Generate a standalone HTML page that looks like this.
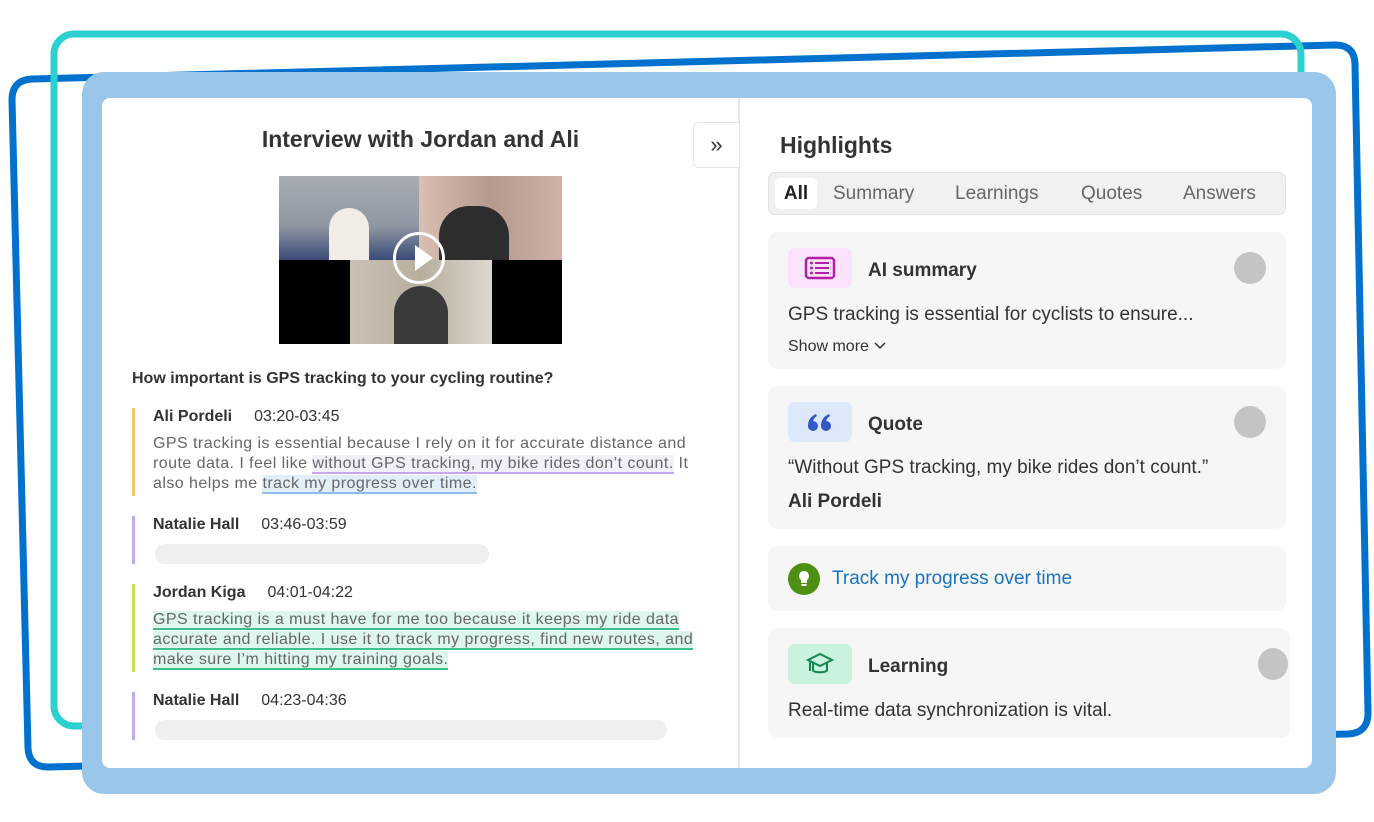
<!DOCTYPE html>
<html><head><meta charset="utf-8"><style>
*{margin:0;padding:0;box-sizing:border-box}
body{width:1374px;height:822px;background:#fff;position:relative;overflow:hidden;font-family:"Liberation Sans",sans-serif;color:#333}
.abs{position:absolute}
.card{position:absolute;left:768px;width:518px;background:#f6f6f6;border-radius:10px}
.ico{position:absolute;left:20px;width:64px;height:40px;border-radius:7px}
.ct{position:absolute;left:100px;font-weight:bold;font-size:19px;color:#333}
.dot{position:absolute;right:20px;width:32px;height:32px;border-radius:50%;background:#c4c4c4}
.bd{position:absolute;left:20px;font-size:19px;color:#333}
.spk{position:absolute;left:132px;border-left:3px solid;padding-left:18px}
.nm{font-weight:bold;font-size:16px;color:#333}
.tm{font-size:16px;color:#333;margin-left:22px;font-weight:normal}
.tx{font-size:16px;color:#666;line-height:20px;margin-top:8px;width:548px;letter-spacing:0.45px}
</style></head><body>
<svg class="abs" style="left:0;top:0" width="1374" height="822">
<path d="M12 100 Q12 80 32 79 L1335 45 Q1355 45 1355 65 L1368 713 Q1368 733 1348 734 L48 767 Q29 767 28 748 Z" fill="none" stroke="#0072ce" stroke-width="7"/>
<rect x="54" y="34" width="1247" height="692" rx="20" fill="none" stroke="#2ecfd0" stroke-width="7"/>
<rect x="82" y="72" width="1254" height="722" rx="22" fill="#9ac6ea"/>
<rect x="102" y="98" width="1210" height="670" rx="8" fill="#fff"/>
<line x1="739" y1="98" x2="739" y2="768" stroke="#e6e6e6" stroke-width="2"/>
</svg>
<div class="abs" style="left:693px;top:122px;width:46px;height:46px;background:#fff;border:1px solid #e6e6e6;border-right:none;border-radius:6px 0 0 6px;font-size:22px;text-align:center;line-height:44px;color:#333">»</div>
<div class="abs" style="left:102px;top:126px;width:637px;text-align:center;font-size:23px;font-weight:bold;color:#333">Interview with Jordan and Ali</div>
<div class="abs" style="left:279px;top:176px;width:283px;height:168px;background:#000">
 <div class="abs" style="left:0;top:0;width:140px;height:84px;background:linear-gradient(#a9aeb3,#8d96a1 60%,#3a4a78)"></div>
 <div class="abs" style="left:140px;top:0;width:143px;height:84px;background:linear-gradient(90deg,#d9c0b3,#b39a8e 50%,#cfb2a6)"></div>
 <div class="abs" style="left:160px;top:30px;width:70px;height:54px;background:#2d2d2d;border-radius:30px 30px 0 0"></div>
 <div class="abs" style="left:50px;top:32px;width:40px;height:52px;background:#f1ece6;border-radius:20px 20px 0 0"></div>
 <div class="abs" style="left:71px;top:84px;width:142px;height:84px;background:linear-gradient(90deg,#c9c2b5,#b7ae9e 50%,#ddd8cf)"></div>
 <div class="abs" style="left:115px;top:110px;width:54px;height:58px;background:#3a3a3a;border-radius:27px 27px 0 0"></div>
 <div class="abs" style="left:114px;top:56px;width:52px;height:52px;border:3px solid #fff;border-radius:50%"></div>
 <div class="abs" style="left:136px;top:69px;width:0;height:0;border-left:18px solid #fff;border-top:13px solid transparent;border-bottom:13px solid transparent"></div>
</div>
<div class="abs" style="left:132px;top:370px;font-size:16px;font-weight:bold;color:#333">How important is GPS tracking to your cycling routine?</div>
<div class="spk" style="top:408px;height:88px;border-color:#f8c66a"><span class="nm">Ali Pordeli</span><span class="tm">03:20-03:45</span>
<div class="tx">GPS tracking is essential because I rely on it for accurate distance and route data. I feel like <span style="background:#f5effa;border-bottom:2px solid #c8a6f0">without GPS tracking, my bike rides don’t count.</span> It also helps me <span style="background:#e3eefb;border-bottom:2px solid #8fbcec">track my progress over time.</span></div></div>
<div class="spk" style="top:516px;height:48px;border-color:#c9a8f4"><span class="nm">Natalie Hall</span><span class="tm">03:46-03:59</span>
<div class="abs" style="left:20px;top:28px;width:334px;height:20px;border-radius:10px;background:#efefef"></div></div>
<div class="spk" style="top:584px;height:88px;border-color:#c6e04a"><span class="nm">Jordan Kiga</span><span class="tm">04:01-04:22</span>
<div class="tx"><span style="background:#ddf7ec;border-bottom:2px solid #3fbf8a">GPS tracking is a must have for me too because it keeps my ride data accurate and reliable. I use it to track my progress, find new routes, and make sure I’m hitting my training goals.</span></div></div>
<div class="spk" style="top:692px;height:48px;border-color:#c9a8f4"><span class="nm">Natalie Hall</span><span class="tm">04:23-04:36</span>
<div class="abs" style="left:20px;top:28px;width:512px;height:20px;border-radius:10px;background:#efefef"></div></div>

<div class="abs" style="left:780px;top:132px;font-size:23px;font-weight:bold;color:#333">Highlights</div>
<div class="abs" style="left:768px;top:172px;width:518px;height:43px;background:#f1f1f1;border:1px solid #e2e2e2;border-radius:7px;font-size:19px;color:#666">
 <div class="abs" style="left:6px;top:5px;width:42px;height:31px;background:#fff;border-radius:5px;font-weight:bold;color:#222;text-align:center;line-height:31px">All</div>
 <span class="abs" style="left:64px;top:10px">Summary</span><span class="abs" style="left:186px;top:10px">Learnings</span><span class="abs" style="left:312px;top:10px">Quotes</span><span class="abs" style="left:414px;top:10px">Answers</span>
</div>
<div class="card" style="top:232px;height:137px">
 <div class="ico" style="top:16px;background:#fde2fb"><svg width="64" height="40"><rect x="18" y="10" width="28" height="20" rx="3" fill="none" stroke="#b01fa6" stroke-width="2.5"/><g fill="#b01fa6"><circle cx="23.5" cy="15" r="1.5"/><circle cx="23.5" cy="20" r="1.5"/><circle cx="23.5" cy="25" r="1.5"/><rect x="27" y="14" width="14" height="2"/><rect x="27" y="19" width="14" height="2"/><rect x="27" y="24" width="14" height="2"/></g></svg></div>
 <div class="ct" style="top:28px">AI summary</div><div class="dot" style="top:20px"></div>
 <div class="bd" style="top:72px">GPS tracking is essential for cyclists to ensure...</div>
 <div class="bd" style="top:106px;font-size:16px">Show more <svg width="14" height="10"><path d="M2 2l5 5 5-5" fill="none" stroke="#333" stroke-width="1.5"/></svg></div>
</div>
<div class="card" style="top:386px;height:143px">
 <div class="ico" style="top:16px;background:#dde9fb"><svg width="64" height="40"><g fill="#3358c8"><circle cx="25" cy="24" r="5"/><path d="M20 24c0-6 3-10 8-12l1 2c-3 2-4 4-4 7z"/><circle cx="38" cy="24" r="5"/><path d="M33 24c0-6 3-10 8-12l1 2c-3 2-4 4-4 7z"/></g></svg></div>
 <div class="ct" style="top:28px">Quote</div><div class="dot" style="top:20px"></div>
 <div class="bd" style="top:71px">“Without GPS tracking, my bike rides don’t count.”</div>
 <div class="bd" style="top:105px;font-weight:bold">Ali Pordeli</div>
</div>
<div class="card" style="top:546px;height:65px">
 <div class="abs" style="left:20px;top:17px;width:32px;height:32px;border-radius:50%;background:#4d8f13"><svg width="32" height="32"><path d="M16 8a5 5 0 0 0-3 9v3h6v-3a5 5 0 0 0-3-9z" fill="#fff"/><rect x="13.5" y="21" width="5" height="2" fill="#fff"/></svg></div>
 <div class="abs" style="left:64px;top:22px;font-size:19px;color:#1a73c0">Track my progress over time</div>
</div>
<div class="card" style="top:628px;height:110px;width:522px">
 <div class="ico" style="top:16px;background:#c9f2df"><svg width="64" height="40"><path d="M20 16l12-6 12 6-12 6z" fill="none" stroke="#14874f" stroke-width="2"/><path d="M25 19v7c0 3 14 3 14 0v-7" fill="none" stroke="#14874f" stroke-width="2"/><path d="M22 17v10" stroke="#14874f" stroke-width="2"/></svg></div>
 <div class="ct" style="top:28px">Learning</div><div class="dot" style="top:20px;right:2px;width:30px"></div>
 <div class="bd" style="top:72px">Real-time data synchronization is vital.</div>
</div>
</body></html>
